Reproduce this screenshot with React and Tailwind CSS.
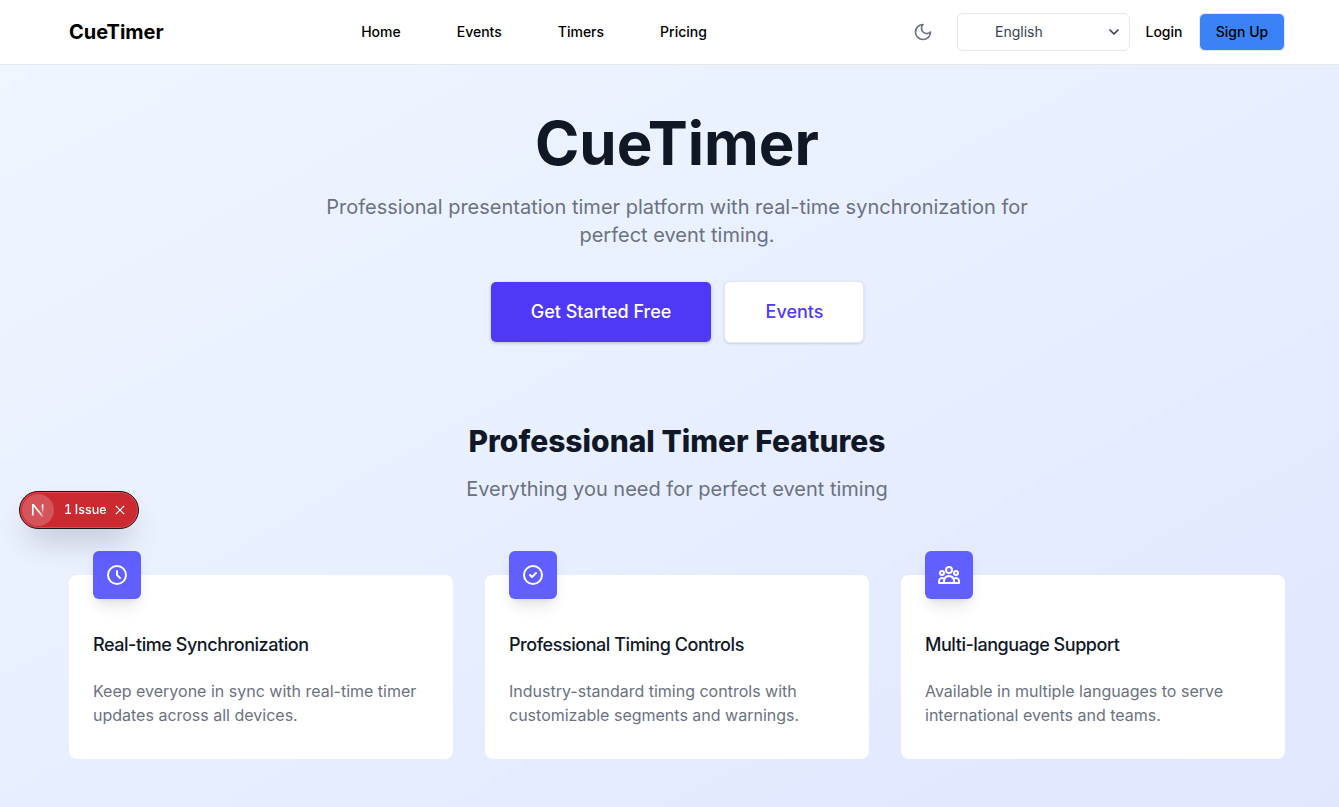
import React from 'react';

const features = [
  {
    title: 'Real-time Synchronization',
    text: 'Keep everyone in sync with real-time timer updates across all devices.',
    icon: 'M12 8v4l3 3m6-3a9 9 0 11-18 0 9 9 0 0118 0z',
  },
  {
    title: 'Professional Timing Controls',
    text: 'Industry-standard timing controls with customizable segments and warnings.',
    icon: 'M9 12l2 2 4-4m6 2a9 9 0 11-18 0 9 9 0 0118 0z',
  },
  {
    title: 'Multi-language Support',
    text: 'Available in multiple languages to serve international events and teams.',
    icon: 'M17 20h5v-2a3 3 0 00-5.356-1.857M17 20H7m10 0v-2c0-.656-.126-1.283-.356-1.857M7 20H2v-2a3 3 0 015.356-1.857M7 20v-2c0-.656.126-1.283.356-1.857m0 0a5.002 5.002 0 019.288 0M15 7a3 3 0 11-6 0 3 3 0 016 0zm6 3a2 2 0 11-4 0 2 2 0 014 0zM7 10a2 2 0 11-4 0 2 2 0 014 0z',
  },
];

function Icon({ d, className, strokeWidth = 2 }) {
  return (
    <svg className={className} fill="none" viewBox="0 0 24 24" stroke="currentColor" strokeWidth={strokeWidth} strokeLinecap="round" strokeLinejoin="round">
      <path d={d} />
    </svg>
  );
}

function Header() {
  return (
    <header className="h-[65px] border-b border-gray-200 bg-white">
      <div className="mx-auto flex h-16 max-w-7xl items-center px-8 text-sm font-medium text-black">
        <a className="w-[292.2px] text-xl font-bold">CueTimer</a>
        <nav className="flex gap-14">
          <a>Home</a>
          <a>Events</a>
          <a>Timers</a>
          <a>Pricing</a>
        </nav>
        <div className="ml-auto flex items-center">
          <Icon className="mr-6 size-5 text-gray-500" d="M12 3a6 6 0 0 0 9 9 9 9 0 1 1-9-9Z" />
          <div className="flex h-[38px] w-[173px] items-center justify-between rounded-md border border-gray-200 pr-[9px] pl-[37px] font-normal text-gray-700">
            English
            <Icon className="size-3" strokeWidth={3.4} d="M4 8l8 8 8-8" />
          </div>
          <a className="ml-[15.5px]">Login</a>
          <a className="ml-[16.5px] flex h-[38px] w-[86px] items-center justify-center rounded-md border border-gray-200 bg-[#3b82f6]">Sign Up</a>
        </div>
      </div>
    </header>
  );
}

export default function App() {
  return (
    <div className="h-[807px] w-full overflow-hidden font-['Inter',sans-serif]">
      <div className="flex h-[807px] w-[1354px] flex-col">
        <Header />
        <main className="flex-1 bg-linear-to-br from-[#eff6ff] to-[#e0e7ff]">
          <div className="mx-auto max-w-7xl px-8 pt-12">
            <section className="text-center">
              <h1 className="text-6xl font-bold text-gray-900">CueTimer</h1>
              <p className="mx-auto mt-5 max-w-3xl text-xl text-gray-500">
                Professional presentation timer platform with real-time synchronization for perfect event timing.
              </p>
              <div className="mt-8 flex justify-center gap-3 text-lg font-medium">
                <a className="flex h-[62px] w-[222px] items-center justify-center rounded-md border border-transparent bg-[#4f39f6] bg-clip-padding text-white shadow-sm">Get Started Free</a>
                <a className="flex h-[62px] w-[140px] items-center justify-center rounded-md border border-gray-200 bg-white pl-px text-[#4f39f6] shadow-sm">Events</a>
              </div>
            </section>
            <section className="mt-20">
              <div className="text-center">
                <h2 className="text-3xl font-extrabold text-gray-900">Professional Timer Features</h2>
                <p className="mt-4 text-xl text-gray-500">Everything you need for perfect event timing</p>
              </div>
              <div className="mt-12 grid grid-cols-3 gap-8 pt-6">
                {features.map((f) => (
                  <article key={f.title} className="h-[184px] rounded-lg bg-white px-6">
                    <div className="-mt-6 flex size-12 items-center justify-center rounded-md bg-[#615fff] text-white shadow-lg">
                      <Icon className="size-6" d={f.icon} />
                    </div>
                    <h3 className="mt-8 text-lg font-medium tracking-tight text-gray-900">{f.title}</h3>
                    <p className="mt-5 text-base text-gray-500">{f.text}</p>
                  </article>
                ))}
              </div>
            </section>
          </div>
        </main>
      </div>
      <div className="fixed top-[491px] left-[19px] flex h-[38px] w-[120px] items-center rounded-full border border-[#171717] bg-[#ca2a30] p-0.5 text-[12.5px] font-medium text-white shadow-[inset_0_0_0_1px_#e5484d,0_16px_32px_-8px_rgba(0,0,0,0.24)]">
        <div className="flex size-8 shrink-0 items-center justify-center rounded-full bg-white/20">
          <svg className="size-4" viewBox="0 0 16 16" fill="none">
            <defs>
              <linearGradient id="leg" x1="12" y1="4" x2="12" y2="12" gradientUnits="userSpaceOnUse">
                <stop stopColor="white" />
                <stop offset="1" stopColor="white" stopOpacity="0" />
              </linearGradient>
              <linearGradient id="diagonal" x1="9" y1="10" x2="13.5" y2="16" gradientUnits="userSpaceOnUse">
                <stop stopColor="white" />
                <stop offset="1" stopColor="white" stopOpacity="0.1" />
              </linearGradient>
            </defs>
            <path d="M2.8 13.4V2.8h.6L12.8 14.6" stroke="url(#diagonal)" strokeWidth="1.7" />
            <path d="M12.6 2.3V12" stroke="url(#leg)" strokeWidth="1.7" />
          </svg>
        </div>
        <span className="ml-2.5 w-[42px] whitespace-nowrap tabular-nums [word-spacing:-0.6px]">1 Issue</span>
        <svg className="ml-2 size-3" viewBox="0 0 12 12" fill="none" stroke="white" strokeWidth="1.2">
          <path d="M1.8 1.8l8.4 8.4M10.2 1.8l-8.4 8.4" />
        </svg>
      </div>
    </div>
  );
}
